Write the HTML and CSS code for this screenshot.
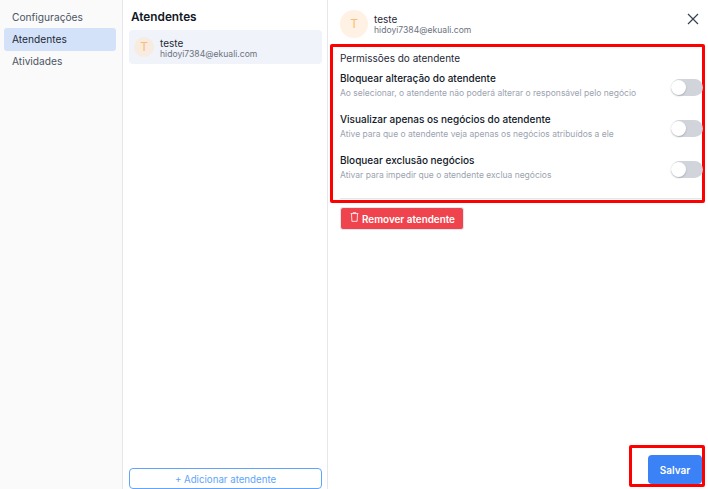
FILE: index.html
```html
<!DOCTYPE html>
<html lang="pt-BR">
<head>
    <meta charset="UTF-8">
    <title>Atendentes</title>
    <link rel="stylesheet" href="styles.css">
</head>
<body>
    <nav class="sidebar">
        <a class="nav-item">Configurações</a>
        <a class="nav-item active">Atendentes</a>
        <a class="nav-item">Atividades</a>
    </nav>

    <section class="list">
        <h2 class="list-title">Atendentes</h2>
        <div class="agent-card">
            <div class="avatar small">T</div>
            <div class="agent-info">
                <div class="agent-name">teste</div>
                <div class="agent-mail">hidoyi7384@ekuali.com</div>
            </div>
        </div>
        <button class="add-button">+ Adicionar atendente</button>
    </section>

    <main class="detail">
        <header class="detail-head">
            <div class="avatar">T</div>
            <div class="agent-info">
                <div class="agent-name">teste</div>
                <div class="agent-mail">hidoyi7384@ekuali.com</div>
            </div>
            <svg class="close" viewBox="0 0 12 12" width="12" height="12">
                <path d="M1 1l10 10M11 1L1 11" stroke="#374151" stroke-width="1.2" fill="none"/>
            </svg>
        </header>

        <div class="perms">
            <div class="perms-title">Permissões do atendente</div>
            <div class="perm">
                <div>
                    <div class="perm-name">Bloquear alteração do atendente</div>
                    <div class="perm-desc">Ao selecionar, o atendente não poderá alterar o responsável pelo negócio</div>
                </div>
                <span class="switch"></span>
            </div>
            <div class="perm">
                <div>
                    <div class="perm-name">Visualizar apenas os negócios do atendente</div>
                    <div class="perm-desc">Ative para que o atendente veja apenas os negócios atribuídos a ele</div>
                </div>
                <span class="switch"></span>
            </div>
            <div class="perm">
                <div>
                    <div class="perm-name">Bloquear exclusão negócios</div>
                    <div class="perm-desc">Ativar para impedir que o atendente exclua negócios</div>
                </div>
                <span class="switch"></span>
            </div>
            <div class="perms-rule"></div>
        </div>

        <button class="remove-button">
            <svg class="trash" viewBox="0 0 10 11" width="9" height="10">
                <path d="M3.5 1.5V.7h3v.8M.7 1.7h8.6M1.7 1.9l.4 8.4h5.8l.4-8.4" stroke="#fff" stroke-width=".9" fill="none" stroke-linejoin="round"/>
            </svg>
            Remover atendente
        </button>

        <footer class="detail-foot">
            <div class="save-mark">
                <button class="save-button">Salvar</button>
            </div>
        </footer>
    </main>
</body>
</html>
```

FILE: styles.css
```css
* {
    box-sizing: border-box;
}
html, body {
    height: 100%;
}
body {
    margin: 0;
    display: flex;
    height: 489px;
    overflow: hidden;
    font-family: 'Inter', 'Liberation Sans', sans-serif;
    background: #fff;
    color: #111827;
}
.sidebar {
    width: 123px;
    flex-shrink: 0;
    padding: 6px 6px 0 4px;
    background: #fafafa;
    border-right: 1px solid #e5e7eb;
}
.nav-item {
    display: block;
    height: 23px;
    margin-bottom: -1px;
    padding-left: 8px;
    border-radius: 3px;
    font-size: 10.2px;
    line-height: 23px;
    color: #4b5563;
}
.nav-item.active {
    background: #d3e2f9;
    color: #1f2937;
}
.list {
    width: 205px;
    flex-shrink: 0;
    display: flex;
    flex-direction: column;
    padding: 0 5px 0 6px;
    border-right: 1px solid #e5e7eb;
}
.list-title {
    margin: 10px 0 5px 2px;
    font-size: 11.8px;
    line-height: 15px;
    font-weight: 600;
}
.agent-card {
    display: flex;
    align-items: center;
    gap: 6px;
    height: 34px;
    padding-left: 5px;
    border-radius: 4px;
    background: #f0f3f9;
}
.agent-card .agent-info {
    padding-top: 2px;
}
.avatar {
    width: 28px;
    height: 28px;
    flex-shrink: 0;
    border-radius: 50%;
    background: #fff1e3;
    color: #fdba74;
    font-size: 12px;
    line-height: 28px;
    text-align: center;
}
.avatar.small {
    width: 20px;
    height: 20px;
    background: #f8ebdf;
    line-height: 20px;
}
.agent-name {
    font-size: 10px;
    line-height: 12px;
    color: #1f2937;
}
.agent-mail {
    font-size: 8.6px;
    line-height: 10px;
    color: #6b7280;
}
.add-button {
    height: 21px;
    margin-top: auto;
    padding: 2px 0 0;
    border: 1px solid #60a5fa;
    border-radius: 4px;
    background: #fff;
    font-family: inherit;
    font-size: 9.7px;
    color: #60a5fa;
}
.detail {
    flex: 1;
    display: flex;
    flex-direction: column;
    padding: 0 3px 0 2px;
}
.detail-head {
    display: flex;
    align-items: center;
    gap: 6px;
    height: 44px;
    padding: 4px 6px 0 10px;
}
.close {
    margin-left: auto;
    margin-top: -10px;
}
.perms {
    height: 159px;
    padding: 5px 9px 0 7px;
    border: 3px solid #ff0000;
    border-radius: 2px;
}
.perms-title {
    font-size: 10px;
    line-height: 13px;
    color: #1f2937;
}
.perm {
    display: flex;
    justify-content: space-between;
    align-items: center;
    height: 41px;
}
.perm-name {
    margin-bottom: 3px;
    font-size: 10px;
    line-height: 13px;
    font-weight: 500;
}
.perm-desc {
    font-size: 8.5px;
    line-height: 11px;
    color: #9ca3af;
}
.switch {
    position: relative;
    width: 32px;
    height: 17px;
    flex-shrink: 0;
    margin-right: -10px;
    margin-top: 3px;
    border-radius: 9px;
    background: #d1d5db;
}
.switch::after {
    content: "";
    position: absolute;
    left: 0;
    top: 1px;
    width: 15px;
    height: 15px;
    border-radius: 50%;
    background: #fff;
    box-shadow: 0 1px 2px rgba(0, 0, 0, 0.2);
}
.perms-rule {
    height: 1px;
    margin-top: 10px;
    margin-right: -9px;
    background: #e5e7eb;
}
.remove-button {
    align-self: flex-start;
    display: flex;
    align-items: center;
    gap: 3px;
    height: 23px;
    margin: 4px 0 0 10px;
    padding: 0 8px 0 9px;
    border: 1px solid #e5e7eb;
    border-radius: 3px;
    background: #ef444e;
    font-family: inherit;
    font-size: 9.9px;
    font-weight: 600;
    color: #fff;
}
.trash {
    margin-top: -3px;
}
.detail-foot {
    margin-top: auto;
    display: flex;
    justify-content: flex-end;
    padding-bottom: 2px;
}
.save-mark {
    width: 76px;
    height: 42px;
    padding: 7px 0 0 16px;
    border: 3px solid #ff0000;
    border-radius: 2px;
}
.save-button {
    width: 54px;
    height: 29px;
    padding: 0;
    border: none;
    border-radius: 4px;
    background: #3b82f6;
    font-family: inherit;
    font-size: 10px;
    font-weight: 600;
    color: #fff;
}
```
